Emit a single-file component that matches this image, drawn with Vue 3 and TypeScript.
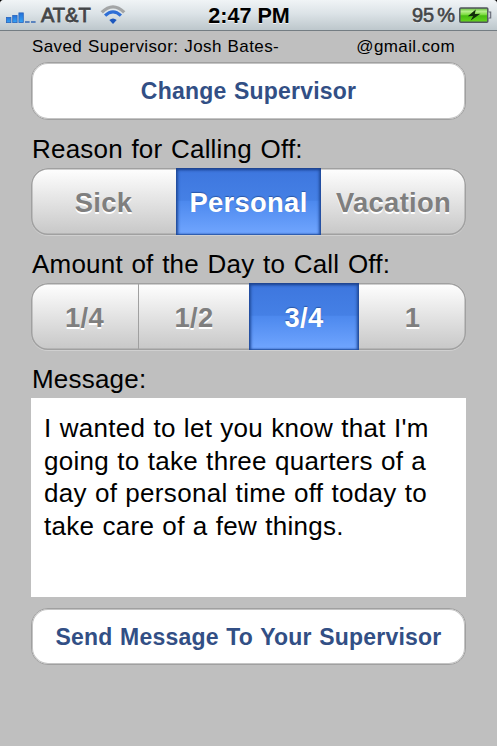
<script setup lang="ts">
import { ref } from 'vue'

const reasons: string[] = ['Sick', 'Personal', 'Vacation']
const amounts: string[] = ['1/4', '1/2', '3/4', '1']
const reason = ref('Personal')
const amount = ref('3/4')
const message = ref(
  "I wanted to let you know that I'm going to take three quarters of a day of personal time off today to take care of a few things."
)
</script>

<template>
  <div class="screen">
    <header class="status">
      <div class="carrier">
        <svg class="signal" width="31" height="12" viewBox="0 0 31 12">
          <defs>
            <linearGradient id="bar" x1="0" y1="0" x2="0" y2="1">
              <stop offset="0" stop-color="#2470d8" />
              <stop offset="1" stop-color="#35a4f5" />
            </linearGradient>
          </defs>
          <g fill="url(#bar)" stroke="#2864bd" stroke-width="0.8">
            <rect x="0.5" y="5.4" width="4.4" height="5.2" />
            <rect x="6.7" y="3.4" width="4.4" height="7.2" />
            <rect x="12.9" y="0.9" width="4.4" height="9.7" />
          </g>
          <path d="M19 10h4.6M25 10h4.6" stroke="#3468b5" stroke-width="1.5" />
        </svg>
        <span class="network">AT&amp;T</span>
        <svg class="wifi" width="26" height="20" viewBox="0 0 26 20">
          <path d="M1.8 7.4Q13-3.8 24.2 7.4" stroke="#a3a5a6" stroke-width="3.3" fill="none" />
          <path d="M5.1 10.7Q13 3 20.9 10.7" stroke="#2e6ed6" stroke-width="3.2" fill="none" />
          <path d="M9.3 15.1Q13 11.7 16.7 15.1L13 18.9Z" fill="#1c57bd" />
        </svg>
      </div>
      <span class="clock">2:47 PM</span>
      <div class="power">
        <span class="percent">95<i class="sign">%</i></span>
        <svg class="battery" width="33" height="17" viewBox="0 0 33 17">
          <defs>
            <linearGradient id="charge" x1="0" y1="0" x2="0" y2="1">
              <stop offset="0" stop-color="#5fbc35" />
              <stop offset="0.25" stop-color="#b4ee8a" />
              <stop offset="0.48" stop-color="#7bdc3e" />
              <stop offset="0.55" stop-color="#48bd12" />
              <stop offset="1" stop-color="#66d51f" />
            </linearGradient>
          </defs>
          <rect x="0.8" y="0.9" width="28" height="14.3" rx="1" fill="url(#charge)" stroke="#51565e" stroke-width="1.5" />
          <path d="M29.5 5h2.2v6h-2.2" fill="#c9ccd5" stroke="#626772" stroke-width="1.1" />
          <path d="M16.8 2.5L8.8 9.2L14.1 9.1L11.7 13.5L21.4 6.8L15.8 7.1Z" fill="#102d09" />
        </svg>
      </div>
    </header>

    <main class="form">
      <div class="saved">
        <span>Saved Supervisor: Josh Bates-</span>
        <span class="mail">@gmail.com</span>
      </div>
      <button class="action change" type="button">Change Supervisor</button>

      <h2 class="label">Reason for Calling Off:</h2>
      <div class="segments thirds">
        <button
          v-for="item in reasons"
          :key="item"
          type="button"
          class="segment"
          :class="{ active: item === reason }"
          @click="reason = item"
        >{{ item }}</button>
      </div>

      <h2 class="label">Amount of the Day to Call Off:</h2>
      <div class="segments quarters">
        <button
          v-for="item in amounts"
          :key="item"
          type="button"
          class="segment"
          :class="{ active: item === amount }"
          @click="amount = item"
        >{{ item }}</button>
      </div>

      <h2 class="label">Message:</h2>
      <textarea v-model="message" class="message" spellcheck="false"></textarea>
      <button class="action send" type="button">Send Message To Your Supervisor</button>
    </main>
  </div>
</template>

<style>
body {
  margin: 0;
  background: #000;
}
</style>

<style scoped>
.screen {
  width: 497px;
  height: 746px;
  overflow: hidden;
  border-radius: 4px 4px 0 0;
  background: #bfbfbf;
  color: #000;
  font-family: "Liberation Sans", Arial, sans-serif;
}
button,
textarea {
  display: block;
  box-sizing: border-box;
  margin: 0;
  padding: 0;
  font-family: inherit;
}
.status {
  box-sizing: border-box;
  display: grid;
  grid-template-columns: 1fr auto 1fr;
  height: 31px;
  padding: 0 5px 0 6px;
  border-bottom: 1px solid #747d83;
  background: linear-gradient(#f0f4f6, #dce3e7 45%, #bdc7cc);
  font-size: 20px;
  font-weight: bold;
  line-height: 31px;
  text-shadow: 0 1px 0 rgba(255, 255, 255, 0.75);
}
.carrier,
.power {
  display: flex;
  color: #434547;
}
.power {
  justify-content: flex-end;
}
.signal {
  margin-top: 12px;
}
.network {
  margin-left: 4px;
  font-weight: normal;
  -webkit-text-stroke: 0.8px #434547;
}
.wifi {
  margin: 5px 0 0 9px;
}
.clock {
  font-size: 21.6px;
}
.percent {
  font-weight: normal;
  -webkit-text-stroke: 0.6px #434547;
}
.sign {
  margin-left: 3px;
  font-style: normal;
}
.battery {
  margin: 7px 0 0 4px;
}
.form {
  padding: 0 31px;
}
.saved {
  display: flex;
  justify-content: space-between;
  height: 31px;
  padding: 0 11px 0 1px;
  font-size: 17px;
  line-height: 32px;
  letter-spacing: 0.4px;
  word-spacing: 0.7px;
  white-space: nowrap;
}
.action {
  width: 435px;
  height: 58px;
  padding-top: 1px;
  border: 1px solid #a0a0a0;
  border-radius: 17px;
  box-shadow: inset 0 0 0 1px #c4c4c4;
  background: #fff;
  color: #324f85;
  font-size: 23px;
  font-weight: bold;
  letter-spacing: 0.2px;
  word-spacing: 1px;
  white-space: nowrap;
}
.label {
  height: 48px;
  margin: 0;
  padding-left: 1px;
  font-size: 26px;
  font-weight: normal;
  line-height: 58px;
  letter-spacing: 0.2px;
  word-spacing: 1.2px;
  white-space: nowrap;
}
.segments {
  display: grid;
  width: 435px;
  height: 67px;
  border-radius: 17px;
  background: linear-gradient(#fff, #c7c7c7);
  box-shadow: inset 0 0 0 1.5px #a0a0a0, 0 1px 0 #d0d0d0;
}
.thirds {
  grid-template-columns: 145px 145px 145px;
}
.quarters {
  grid-template-columns: 108px 110px 110px 107px;
}
.segment {
  padding-top: 2px;
  border: 0;
  background: none;
  color: #7f7f7f;
  font-size: 27.4px;
  font-weight: bold;
  letter-spacing: 0.3px;
  text-shadow: 0 1.5px 0 #fff;
}
.quarters .segment:first-child {
  border-right: 1px solid #a0a0a0;
}
.segment.active {
  color: #fff;
  background: linear-gradient(#3d76de, #4580e5 48%, #4d89ee 50%, #71a6ff);
  box-shadow: inset 0 2px 3px #1d438e, inset 2px 0 3px #2552a5, inset -2px 0 3px #2552a5, inset 0 -1px 1px #3e70c0;
  text-shadow: 0 -1px 1px #2b58a8;
}
.message {
  width: 435px;
  height: 199px;
  padding: 14px 10px 14px 13px;
  border: 0;
  outline: 0;
  resize: none;
  overflow: hidden;
  background: #fff;
  color: #000;
  font-size: 26px;
  line-height: 32.7px;
  letter-spacing: 0.3px;
  word-spacing: 0.6px;
}
.send {
  margin-top: 11px;
  height: 57px;
}
</style>
